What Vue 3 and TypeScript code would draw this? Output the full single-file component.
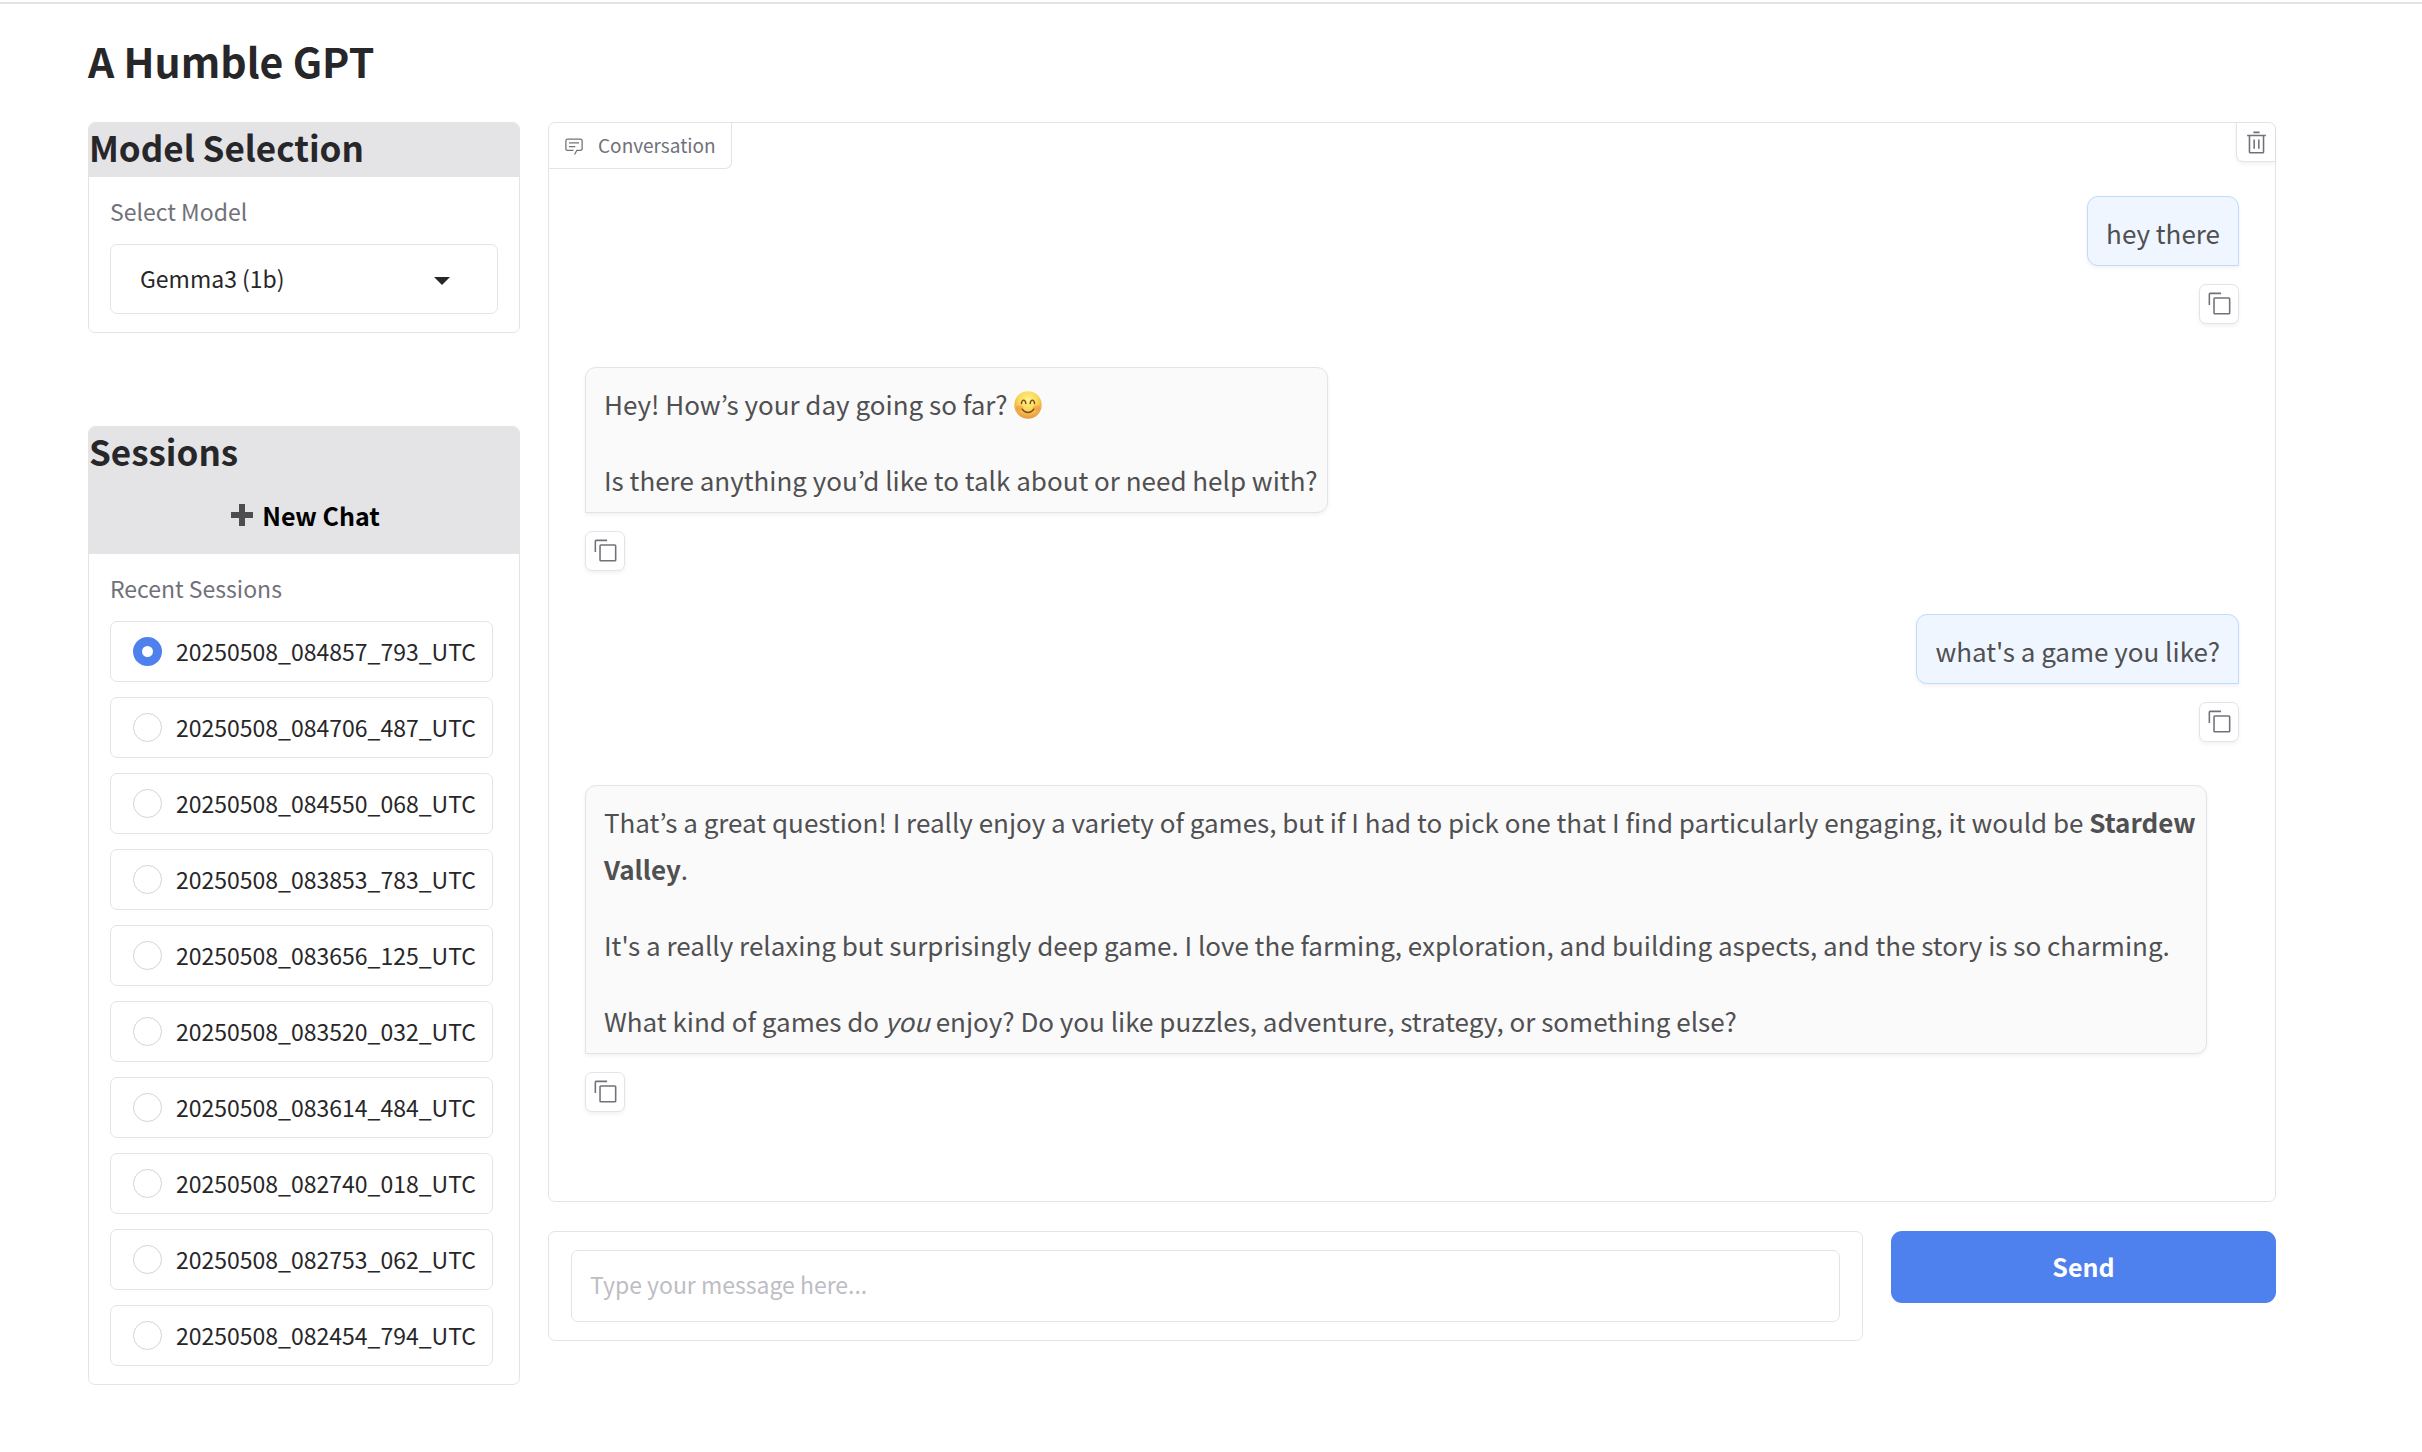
<script setup lang="ts">
import { ref } from 'vue'

interface Span {
  text: string
  kind?: 'strong' | 'em' | 'smile'
}

interface Message {
  id: number
  role: 'user' | 'bot'
  paragraphs: Span[][]
}

const model = ref('gemma3-1b')
const draft = ref('')
const activeSession = ref('20250508_084857_793_UTC')

const sessions: string[] = [
  '20250508_084857_793_UTC',
  '20250508_084706_487_UTC',
  '20250508_084550_068_UTC',
  '20250508_083853_783_UTC',
  '20250508_083656_125_UTC',
  '20250508_083520_032_UTC',
  '20250508_083614_484_UTC',
  '20250508_082740_018_UTC',
  '20250508_082753_062_UTC',
  '20250508_082454_794_UTC',
]

const messages = ref<Message[]>([
  { id: 1, role: 'user', paragraphs: [[{ text: 'hey there' }]] },
  {
    id: 2,
    role: 'bot',
    paragraphs: [
      [{ text: 'Hey! How’s your day going so far? ' }, { text: '', kind: 'smile' }],
      [{ text: 'Is there anything you’d like to talk about or need help with?' }],
    ],
  },
  { id: 3, role: 'user', paragraphs: [[{ text: "what's a game you like?" }]] },
  {
    id: 4,
    role: 'bot',
    paragraphs: [
      [
        {
          text: 'That’s a great question! I really enjoy a variety of games, but if I had to pick one that I find particularly engaging, it would be ',
        },
        { text: 'Stardew Valley', kind: 'strong' },
        { text: '.' },
      ],
      [
        {
          text: "It's a really relaxing but surprisingly deep game. I love the farming, exploration, and building aspects, and the story is so charming.",
        },
      ],
      [
        { text: 'What kind of games do ' },
        { text: 'you', kind: 'em' },
        { text: ' enjoy? Do you like puzzles, adventure, strategy, or something else?' },
      ],
    ],
  },
])

function send(): void {
  const text = draft.value.trim()
  if (!text) return
  messages.value.push({ id: messages.value.length + 1, role: 'user', paragraphs: [[{ text }]] })
  draft.value = ''
}
</script>

<template>
  <div class="page">
    <h1 class="title">A Humble GPT</h1>
    <div class="columns">
      <aside class="sidebar">
        <section class="panel">
          <div class="panel-head">
            <h2>Model Selection</h2>
          </div>
          <div class="panel-body">
            <label class="field-label" for="model">Select Model</label>
            <div class="select-box">
              <select id="model" v-model="model">
                <option value="gemma3-1b">Gemma3 (1b)</option>
              </select>
              <svg class="caret" viewBox="0 0 16 8" aria-hidden="true"><path d="M0 0h16L8 8z" /></svg>
            </div>
          </div>
        </section>

        <section class="panel">
          <div class="panel-head">
            <h2>Sessions</h2>
            <button class="new-chat" type="button">
              <svg viewBox="0 0 22 22" aria-hidden="true"><path d="M8 0h6v8h8v6h-8v8H8v-8H0V8h8z" /></svg>
              <span>New Chat</span>
            </button>
          </div>
          <div class="panel-body" role="radiogroup" aria-labelledby="recent-label">
            <span id="recent-label" class="field-label">Recent Sessions</span>
            <div class="session-list">
              <label v-for="session in sessions" :key="session" class="session">
                <input v-model="activeSession" type="radio" name="session" :value="session" />
                <span>{{ session }}</span>
              </label>
            </div>
          </div>
        </section>
      </aside>

      <main class="main">
        <section class="chat" aria-label="Conversation">
          <div class="chat-bar">
            <div class="chat-tag">
              <svg viewBox="0 0 32 32" aria-hidden="true">
                <path
                  d="M17.74 30L16 29l4-7h6a2 2 0 0 0 2-2V8a2 2 0 0 0-2-2H6a2 2 0 0 0-2 2v12a2 2 0 0 0 2 2h9v2H6a4 4 0 0 1-4-4V8a4 4 0 0 1 4-4h20a4 4 0 0 1 4 4v12a4 4 0 0 1-4 4h-4.84Z"
                />
                <path d="M8 10h16v2H8zM8 16h10v2H8z" />
              </svg>
              <span>Conversation</span>
            </div>
            <button class="icon-button clear" type="button" aria-label="Clear">
              <svg viewBox="0 0 32 32" aria-hidden="true">
                <path
                  d="M12 12h2v12h-2zM18 12h2v12h-2zM4 6v2h2v20a2 2 0 0 0 2 2h16a2 2 0 0 0 2-2V8h2V6zm4 22V8h16v20zM12 2h8v2h-8z"
                />
              </svg>
            </button>
          </div>
          <div class="messages">
            <article v-for="message in messages" :key="message.id" class="message" :class="message.role">
              <div class="bubble">
                <p v-for="(paragraph, i) in message.paragraphs" :key="i">
                  <template v-for="(span, j) in paragraph" :key="j">
                    <strong v-if="span.kind === 'strong'">{{ span.text }}</strong>
                    <em v-else-if="span.kind === 'em'">{{ span.text }}</em>
                    <svg v-else-if="span.kind === 'smile'" class="smile" viewBox="0 0 28 28" role="img" aria-label="😊">
                      <defs>
                        <radialGradient id="face" cx="50%" cy="32%" r="68%">
                          <stop offset="0" stop-color="#fff48a" />
                          <stop offset="0.5" stop-color="#fbd95a" />
                          <stop offset="1" stop-color="#e9943f" />
                        </radialGradient>
                      </defs>
                      <circle cx="14" cy="14" r="13.7" fill="url(#face)" />
                      <ellipse cx="5.6" cy="17" rx="3.6" ry="2.8" fill="#f0803c" opacity="0.4" />
                      <ellipse cx="22.4" cy="17" rx="3.6" ry="2.8" fill="#f0803c" opacity="0.4" />
                      <g fill="none" stroke="#7a4a1c" stroke-width="1.4" stroke-linecap="round">
                        <path d="M7.4 12.6C8 8 11.2 8 11.9 12.6" />
                        <path d="M16.1 12.6C16.8 8 20 8 20.6 12.6" />
                        <path d="M8.2 18.2C11 22.6 17 22.6 19.8 18.2" />
                      </g>
                    </svg>
                    <template v-else>{{ span.text }}</template>
                  </template>
                </p>
              </div>
              <button class="icon-button copy" type="button" aria-label="Copy message">
                <svg viewBox="0 0 32 32" aria-hidden="true">
                  <path
                    d="M28 10v18H10V10h18m0-2H10a2 2 0 0 0-2 2v18a2 2 0 0 0 2 2h18a2 2 0 0 0 2-2V10a2 2 0 0 0-2-2Z"
                  />
                  <path d="M4 18H2V4a2 2 0 0 1 2-2h14v2H4Z" />
                </svg>
              </button>
            </article>
          </div>
        </section>

        <form class="composer" @submit.prevent="send">
          <div class="composer-box">
            <input v-model="draft" type="text" aria-label="Message" placeholder="Type your message here..." />
          </div>
          <button class="send" type="submit">Send</button>
        </form>
      </main>
    </div>
  </div>
</template>

<style>
body {
  background: #fff;
}
</style>

<style scoped>
.page {
  box-sizing: border-box;
  padding: 26px 146px 60px 88px;
  margin-top: 2px;
  border-top: 2px solid #e4e4e7;
  color: #27272a;
  font-family: 'Noto Sans CJK KR', 'Noto Sans', sans-serif;
  font-size: 23px;
  line-height: 36px;
}

.page *,
.page *::before {
  box-sizing: border-box;
}

button,
input,
select {
  margin: 0;
  font: inherit;
  color: inherit;
}

button {
  cursor: pointer;
}

svg {
  display: block;
  flex: none;
  fill: currentColor;
}

.title {
  margin: 0 0 32px;
  font-size: 41px;
  line-height: 60px;
  font-weight: 700;
}

.columns {
  display: grid;
  grid-template-columns: minmax(0, 1fr) minmax(0, 4fr);
  align-items: start;
  gap: 28px;
}

.sidebar {
  display: flex;
  flex-direction: column;
  gap: 93px;
}

.panel {
  border: 1px solid #e4e4e7;
  border-radius: 7px;
}

.panel-head {
  border-radius: 6px 6px 0 0;
  background: #e4e4e7;
}

.panel-head h2 {
  margin: 0;
  font-size: 35px;
  line-height: 47px;
  font-weight: 700;
}

.panel-head h2:last-child {
  padding-bottom: 7px;
}

.new-chat {
  display: flex;
  align-items: center;
  justify-content: center;
  gap: 9px;
  width: 100%;
  height: 80px;
  padding: 1px 0 0 3px;
  border: 0;
  background: none;
  color: #000;
  font-size: 25px;
  font-weight: 700;
}

.new-chat svg {
  width: 22px;
  height: 22px;
  color: #4d4d4d;
}

.panel-body {
  padding: 16px 21px 18px;
}

.field-label {
  display: block;
  margin-bottom: 15px;
  color: #71717a;
}

.select-box {
  display: grid;
  align-items: center;
}

.select-box > * {
  grid-area: 1 / 1;
}

.select-box select {
  width: 100%;
  height: 70px;
  padding: 0 60px 2px 29px;
  border: 1px solid #e4e4e7;
  border-radius: 7px;
  background: #fff;
  appearance: none;
}

.caret {
  justify-self: end;
  width: 16px;
  height: 8px;
  margin: 4px 48px 0 0;
  pointer-events: none;
}

.session-list {
  display: flex;
  flex-direction: column;
  gap: 15px;
  padding-right: 5px;
}

.session {
  display: flex;
  align-items: center;
  gap: 14px;
  height: 61px;
  padding-left: 22px;
  border: 1px solid #e4e4e7;
  border-radius: 7px;
  white-space: nowrap;
}

.session span {
  padding-bottom: 2px;
}

.session input {
  flex: none;
  width: 29px;
  height: 29px;
  border: 1px solid #d4d4d8;
  border-radius: 50%;
  background: #fff;
  appearance: none;
}

.session input:checked {
  border: 9px solid #4f81ee;
}

.main {
  display: flex;
  flex-direction: column;
  gap: 29px;
}

.chat {
  min-height: 1080px;
  border: 1px solid #e4e4e7;
  border-radius: 7px;
}

.chat-bar {
  display: flex;
  align-items: flex-start;
  justify-content: space-between;
  height: 46px;
}

.chat-tag {
  display: flex;
  align-items: center;
  gap: 14px;
  height: 46px;
  padding: 0 15px;
  border: solid #e4e4e7;
  border-width: 0 1px 1px 0;
  border-radius: 0 0 7px 0;
  color: #71717a;
  font-size: 19px;
}

.chat-tag span {
  padding-bottom: 2px;
}

.chat-tag svg {
  width: 20px;
  height: 20px;
}

.icon-button {
  display: flex;
  align-items: center;
  justify-content: center;
  width: 40px;
  height: 40px;
  padding: 0;
  border: 1px solid #e4e4e7;
  border-radius: 7px;
  background: #fff;
  box-shadow: 0 2px 4px rgba(0, 0, 0, 0.06);
  color: #71717a;
}

.icon-button svg {
  width: 25px;
  height: 25px;
}

.icon-button.copy {
  padding-bottom: 2px;
}

.icon-button.clear {
  width: 39px;
  height: 39px;
  border-width: 0 0 1px 1px;
  border-radius: 0 7px 0 7px;
}

.messages {
  display: flex;
  flex-direction: column;
  gap: 43px;
  padding: 27px 36px;
}

.message {
  display: flex;
  flex-direction: column;
  align-items: flex-start;
  gap: 18px;
}

.message.user {
  align-items: flex-end;
}

.bubble {
  max-width: calc(100% - 32px);
  padding: 12px 9px 9px 18px;
  border: 1px solid #e4e4e7;
  border-radius: 11px 11px 11px 0;
  background: #fafafa;
  box-shadow: 0 2px 4px rgba(0, 0, 0, 0.06);
  color: #505052;
  font-size: 26px;
  line-height: 47px;
}

.user .bubble {
  padding-right: 18px;
  border-color: #bfdbfe;
  border-radius: 11px 11px 0 11px;
  background: #eff6ff;
}

.bubble p {
  margin: 0;
}

.bubble p + p {
  margin-top: 29px;
}

.smile {
  display: inline-block;
  width: 28px;
  height: 28px;
  vertical-align: -4px;
}

.composer {
  display: grid;
  grid-template-columns: minmax(0, 1fr) 385px;
  align-items: start;
  gap: 28px;
}

.composer-box {
  padding: 18px 22px;
  border: 1px solid #e4e4e7;
  border-radius: 7px;
}

.composer-box input {
  display: block;
  width: 100%;
  height: 72px;
  padding: 0 18px 4px;
  border: 1px solid #e4e4e7;
  border-radius: 7px;
  background: #fff;
}

.composer-box input::placeholder {
  color: #bdbdc4;
  opacity: 1;
}

.send {
  height: 72px;
  padding: 0 0 2px;
  border: 0;
  border-radius: 11px;
  background: #4f81ee;
  color: #fff;
  font-size: 25px;
  font-weight: 700;
}
</style>
